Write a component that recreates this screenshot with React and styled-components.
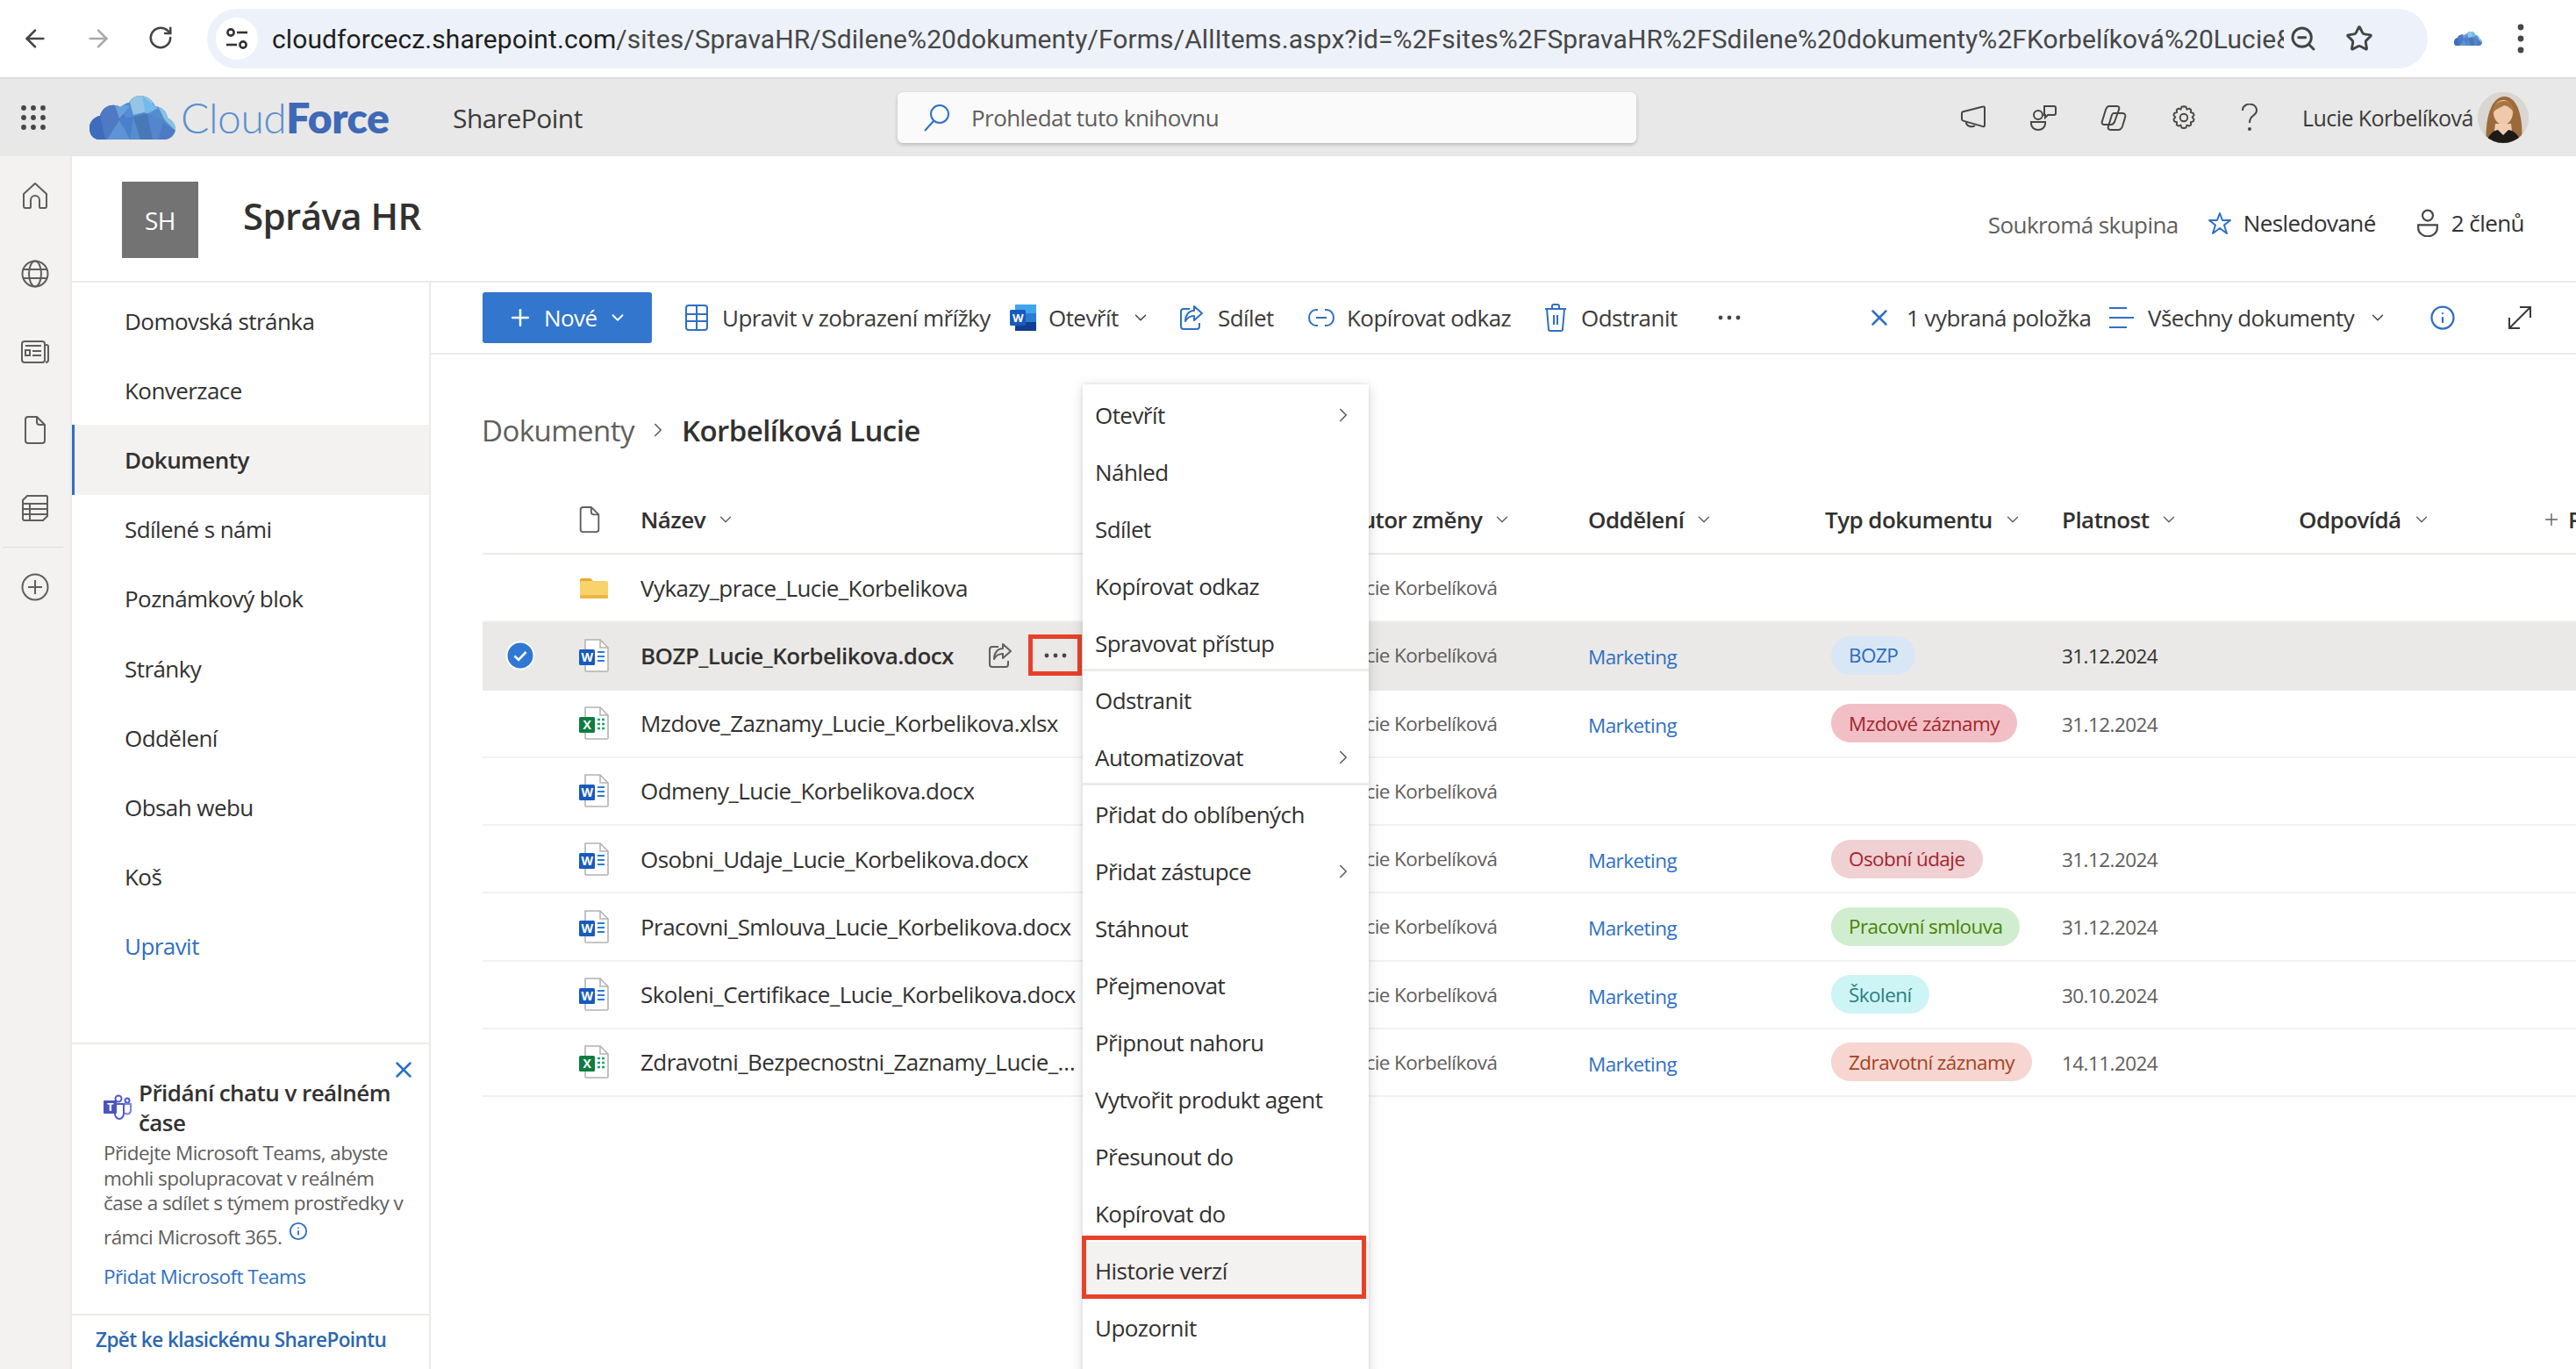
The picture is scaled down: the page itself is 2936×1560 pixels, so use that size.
import React from 'react';
import styled, { createGlobalStyle } from 'styled-components';
import { ArrowLeft, ArrowRight, RotateCw, ZoomOut, Star, ChevronDown, ChevronRight, Plus, X, Info, Search } from 'lucide-react';

const FONT = '"Open Sans", "Noto Sans", sans-serif';
const BLUE = '#2f6fc4';
const INK = '#323130';

const Global = createGlobalStyle`
  html, body { margin: 0; padding: 0; background: #fff; }
  * { box-sizing: border-box; }
  body { font-family: ${FONT}; color: ${INK}; }
`;

const Page = styled.div`
  position: relative; width: 2936px; height: 1560px; overflow: hidden;
  display: flex; flex-direction: column; background: #fff;
  font-family: ${FONT}; letter-spacing: -0.035em;
`;

/* browser chrome */
const BrowserBar = styled.div`
  height: 90px; flex: none; display: flex; align-items: center; padding-left: 24px;
  background: #fff; border-bottom: 2px solid #dedede; color: #474747;
`;
const NavIcons = styled.div`
  display: flex; gap: 40px; width: 212px; flex: none;
  svg { display: block; }
`;
const Pill = styled.div`
  width: 2531px; height: 68px; flex: none; border-radius: 34px; background: #edf2fa;
  display: flex; align-items: center; padding: 0 32px 0 10px;
`;
const TuneCircle = styled.div`
  width: 48px; height: 48px; border-radius: 50%; background: #fff; flex: none;
  display: flex; align-items: center; justify-content: center;
`;
const Url = styled.div`
  margin-left: 16px; width: 2293px; flex: none;
  font-family: Roboto, "Liberation Sans", sans-serif; font-size: 30px; letter-spacing: 0.003em;
  color: #474747; white-space: nowrap; overflow: hidden;
  b { color: #1f1f1f; font-weight: 400; }
`;
const PillIcons = styled.div`
  display: flex; gap: 32px; margin-left: 6px; color: #444;
`;
const BrowserRight = styled.div`
  display: flex; align-items: center; margin-left: 30px; gap: 40px;
`;

/* suite bar */
const SuiteBar = styled.div`
  height: 88px; flex: none; background: #e8e8e8; display: flex; align-items: center;
`;
const Waffle = styled.div`
  width: 102px; flex: none; padding-left: 24px; display: flex; align-items: center;
`;
const Brand = styled.div`
  display: flex; align-items: center; gap: 6px; width: 414px; flex: none;
`;
const BrandText = styled.div`
  font-family: Lato, "Open Sans", sans-serif; font-size: 48px; letter-spacing: -0.01em; line-height: 1;
  color: #5b8fcf; font-weight: 300; white-space: nowrap;
  b { color: #3f68b6; font-weight: 800; }
`;
const AppName = styled.div`
  width: 507px; flex: none; font-size: 30px; font-weight: 500; color: #3b3a39;
`;
const SearchBox = styled.div`
  width: 842px; height: 58px; flex: none; border-radius: 6px; background: #fafafa;
  box-shadow: 0 2px 4px rgba(0,0,0,.2); display: flex; align-items: center; gap: 24px;
  padding-left: 30px; font-size: 26px; color: #605e5c;
`;
const SuiteIcons = styled.div`
  display: flex; align-items: center; margin-left: 369px; gap: 50px; color: #484644;
  svg { display: block; }
`;
const UserName = styled.div`
  margin-left: 50px; width: 200px; font-size: 25px; color: #3b3a39; white-space: nowrap;
`;
const Avatar = styled.div`
  width: 58px; height: 58px; border-radius: 50%; overflow: hidden; flex: none; background: #d8d3cd;
  svg { display: block; }
`;

/* workspace */
const Workspace = styled.div`
  flex: 1; display: flex; min-height: 0;
`;
const Rail = styled.div`
  width: 82px; flex: none; background: #f3f2f1; border-right: 2px solid #eceae8;
  display: flex; flex-direction: column; color: #605e5c;
`;
const RailCell = styled.div`
  height: 89px; flex: none; display: flex; align-items: center; justify-content: center;
`;
const RailDivider = styled.div`
  height: 1px; margin: 0 8px 0 3px; background: #e1dfdd;
`;
const Column = styled.div`
  flex: 1; min-width: 0; display: flex; flex-direction: column;
`;
const SiteHeader = styled.div`
  height: 144px; flex: none; display: flex; align-items: flex-start; padding: 29px 59px 0 57px;
  border-bottom: 2px solid #edebe9;
`;
const SiteTile = styled.div`
  width: 87px; height: 87px; background: #737373; color: #fff; font-size: 28px;
  display: flex; align-items: center; justify-content: center; flex: none;
`;
const SiteTitle = styled.h1`
  margin: 0 0 0 51px; font-size: 42px; line-height: 78px; font-weight: 600; color: ${INK};
`;
const SiteMeta = styled.div`
  margin-left: auto; display: flex; align-items: center; height: 94px; font-size: 26px; color: ${INK};
`;
const Muted = styled.span`
  color: #605e5c; margin-right: 34px; position: relative; top: 2px;
`;
const MetaItem = styled.span`
  display: flex; align-items: center; gap: 14px; margin-right: ${p => p.$mr || 0}px;
`;
const Body = styled.div`
  flex: 1; display: flex; min-height: 0;
`;
const SideNav = styled.nav`
  width: 409px; flex: none; border-right: 2px solid #edebe9; display: flex; flex-direction: column; padding-top: 4px;
`;
const NavItem = styled.div`
  height: 79.2px; flex: none; display: flex; align-items: center; font-size: 26px;
  padding-left: ${p => (p.$active ? '57px' : '60px')};
  color: ${p => (p.$link ? BLUE : INK)};
  font-weight: ${p => (p.$active ? 600 : 400)};
  background: ${p => (p.$active ? '#f3f2f1' : 'transparent')};
  border-left: ${p => (p.$active ? `3px solid ${BLUE}` : 'none')};
`;
const TeamsCard = styled.div`
  position: relative; margin-top: auto; height: 311px; flex: none; border-top: 2px solid #edebe9;
  border-bottom: 2px solid #edebe9; padding: 38px 20px 0 36px; font-size: 22.5px; color: #605e5c;
`;
const CardClose = styled.div`
  position: absolute; top: 14px; right: 14px; color: ${BLUE};
`;
const CardHead = styled.div`
  display: flex; align-items: center; gap: 8px;
  font-size: 26px; font-weight: 600; line-height: 34px; color: ${INK}; margin-bottom: 4px;
`;
const CardBody = styled.div`
  line-height: 28.6px;
  svg { margin-left: 8px; position: relative; top: -4px; color: ${BLUE}; }
`;
const CardLast = styled.div`
  margin-top: 10px;
`;
const CardLink = styled.div`
  color: ${BLUE}; margin-top: 15px;
`;
const ClassicLink = styled.div`
  height: 61px; flex: none; display: flex; align-items: center; padding-left: 27px;
  font-size: 22.5px; font-weight: 600; color: #2b67b2; padding-bottom: 6px;
`;

/* main */
const Main = styled.main`
  flex: 1; min-width: 0; display: flex; flex-direction: column; overflow: hidden;
`;
const CommandBar = styled.div`
  height: 82px; flex: none; display: flex; align-items: center; padding-left: 59px; font-size: 26px;
  border-bottom: 2px solid #edebe9; color: #3b3a39;
`;
const NewButton = styled.div`
  width: 193px; height: 58px; flex: none; border-radius: 3px; background: #3376cd; color: #fff;
  display: flex; align-items: center; gap: 12px; padding-left: 28px; font-weight: 500; margin-right: 38px;
`;
const Cmd = styled.div`
  width: ${p => p.$w}px; flex: none; display: flex; align-items: center; gap: ${p => p.$gap ?? 16}px; white-space: nowrap;
  color: #3b3a39;
  svg { flex: none; }
  > svg.tint { color: ${BLUE}; }
  > svg.soft { color: #605e5c; }
`;
const Breadcrumb = styled.div`
  height: 156px; flex: none; display: flex; align-items: center; padding: 16px 0 0 58px; font-size: 33px; color: #605e5c;
  svg { margin: 0 14px; color: #605e5c; }
  b { font-weight: 600; color: ${INK}; }
`;
const COLS = '90px 90px 805px 275px 270px 270px 270px 270px 1fr';
const HeadRow = styled.div`
  height: 72px; flex: none; margin-left: 59px; display: grid; grid-template-columns: ${COLS}; align-items: center;
  border-bottom: 2px solid #edebe9; padding-bottom: 6px; font-size: 26px; font-weight: 600; color: ${INK}; white-space: nowrap;
`;
const HeadCell = styled.div`
  display: flex; align-items: center; gap: 12px; min-width: 0;
  svg { color: #605e5c; }
`;
const AddCol = styled.div`
  display: flex; align-items: center; gap: 8px; margin-left: 7px; font-weight: 600;
  svg { color: #605e5c; flex: none; }
`;
const Row = styled.div`
  height: 77.25px; flex: none; margin-left: 59px; display: grid; grid-template-columns: ${COLS}; align-items: center;
  border-bottom: 2px solid ${p => (p.$selected ? '#ebe9e7' : '#f3f2f1')};
  background: ${p => (p.$selected ? '#ebe9e7' : 'transparent')};
  position: relative;
`;
const CheckWrap = styled.div`
  display: flex; align-items: center; justify-content: center; padding-right: 4px;
`;
const IconCell = styled.div`
  display: flex; align-items: center; padding-left: 20px;
  svg { display: block; }
`;
const NameCell = styled.div`
  position: relative; display: flex; align-items: center; min-width: 0; font-size: 26px;
  color: ${INK}; font-weight: ${p => (p.$selected ? 600 : 400)};
`;
const NameText = styled.span`
  display: block; max-width: 502px; white-space: nowrap; overflow: hidden; text-overflow: ellipsis;
`;
const RowTools = styled.div`
  position: absolute; left: 396px; top: 0; bottom: 0; display: flex; align-items: center; color: #605e5c;
`;
const MoreBox = styled.div`
  margin-left: 18px; width: 61px; height: 47px; border: 5px solid #e8412a; display: flex; align-items: center; justify-content: center; color: #484644;
`;
const AuthorCell = styled.div`
  font-size: 22.5px; color: #605e5c; white-space: nowrap; margin-left: -3px;
`;
const LinkCell = styled.div`
  font-size: 22.5px; color: ${BLUE}; padding-top: 4px;
`;
const DateCell = styled.div`
  font-size: 22.5px; color: ${p => (p.$selected ? INK : '#605e5c')}; padding-top: 2px;
`;
const TagCell = styled.div`
  padding-left: 7px; display: flex;
`;
const Tag = styled.span`
  height: 44px; padding: 0 20px; border-radius: 22px; display: inline-flex; align-items: center; font-size: 22.5px; white-space: nowrap;
  background: ${p => p.$bg}; color: ${p => p.$fg};
`;

/* context menu */
const Menu = styled.div`
  position: absolute; left: 1234px; top: 438px; width: 326px; height: 1130px; background: #fff; padding-top: 2px;
  box-shadow: 0 3px 14px rgba(0,0,0,.16), 0 0 4px rgba(0,0,0,.08); z-index: 5;
`;
const MenuItem = styled.div`
  position: relative; height: 65px; display: flex; align-items: center; justify-content: space-between;
  padding: 0 16px 0 14px; font-size: 26px; color: ${INK};
  background: ${p => (p.$on ? '#f3f2f1' : 'transparent')};
  svg { color: #605e5c; }
`;
const Callout = styled.div`
  position: absolute; left: -1px; right: 3px; top: -7px; bottom: 0; border: 5px solid #e8412a; pointer-events: none;
`;
const MenuDivider = styled.div`
  height: 3px; margin-top: -3px; background: #edebe9; position: relative;
`;

/* drawings */
const TuneIcon = () => (
  <svg width="26" height="28" viewBox="0 0 26 28" fill="none" stroke="#333" strokeWidth="2.6">
    <circle cx="6" cy="7" r="3.6" /><path d="M13 7h12" />
    <circle cx="20" cy="21" r="3.6" /><path d="M1 21h12" />
  </svg>
);
const Dots = ({ c = '#474747' }) => (
  <svg width="8" height="34" viewBox="0 0 8 34" fill={c}><circle cx="4" cy="4" r="3.4" /><circle cx="4" cy="17" r="3.4" /><circle cx="4" cy="30" r="3.4" /></svg>
);
const ThreeDots = ({ c = '#484644' }) => (
  <svg width="26" height="6" viewBox="0 0 26 6" fill={c}><circle cx="3" cy="3" r="2.4" /><circle cx="13" cy="3" r="2.4" /><circle cx="23" cy="3" r="2.4" /></svg>
);
const WaffleIcon = () => (
  <svg width="28" height="28" viewBox="0 0 28 28" fill="#484644">
    {[3, 14, 25].flatMap(y => [3, 14, 25].map(x => <circle key={`${x}-${y}`} cx={x} cy={y} r="2.9" />))}
  </svg>
);
const CloudMark = ({ w = 98, h = 50, id = 'cl' }) => (
  <svg width={w} height={h} viewBox="0 0 98 50">
    <defs>
      <clipPath id={id}>
        <path d="M12 50C4 50 0 44 0 37c0-7 5-13 12-14 2-8 9-13 17-12 3 0 5 1 6 2 4-3 7-5 10-5 2-5 7-8 13-8 8 0 14 5 17 12 8 1 13 6 14 13 5 3 9 7 9 13 0 7-6 12-13 12z" />
      </clipPath>
    </defs>
    <g clipPath={`url(#${id})`}>
      <rect width="98" height="50" fill="#558dcf" />
      <polygon points="0,20 30,8 45,30 20,50 0,50" fill="#4f79c4" />
      <polygon points="0,30 12,22 18,50 0,50" fill="#3f6dbd" />
      <polygon points="28,8 46,12 34,26" fill="#67a0dc" />
      <polygon points="44,0 78,0 66,18 50,22" fill="#94c5e4" />
      <polygon points="60,0 78,14 64,22" fill="#73b9ea" />
      <polygon points="78,12 98,24 98,40 86,28" fill="#8bc2e2" />
      <polygon points="50,24 66,20 72,50 58,50" fill="#4878b8" />
      <polygon points="66,20 86,28 82,50 72,50" fill="#5486ce" />
      <polygon points="20,50 34,28 46,50" fill="#5c95d6" />
      <polygon points="34,26 50,24 46,50" fill="#4a80cb" />
      <polygon points="84,30 98,40 90,50 78,50" fill="#4c7bc4" />
    </g>
  </svg>
);
const Megaphone = () => (
  <svg width="30" height="28" viewBox="0 0 30 28" fill="none" stroke="#484644" strokeWidth="2" strokeLinejoin="round">
    <path d="M2 9c0-1 .5-1.4 1.5-1.7L26 1.5c1-.3 2 .2 2 1.3v20c0 1.2-1 1.7-2 1.3L3.5 17.6C2.5 17.3 2 16.8 2 16z" />
    <path d="M7 19a6 5 0 0 0 10 4" />
  </svg>
);
const PeopleChat = () => (
  <svg width="30" height="30" viewBox="0 0 30 30" fill="none" stroke="#484644" strokeWidth="2">
    <circle cx="9" cy="12" r="5" /><path d="M1 20h16v2a8 7 0 0 1-16 0z" />
    <path d="M16 2h11a2 2 0 0 1 2 2v6a2 2 0 0 1-2 2h-7l-3 3v-3h-1z" />
  </svg>
);
const Copilot = () => (
  <svg width="30" height="30" viewBox="0 0 30 30" fill="none" stroke="#484644" strokeWidth="2" strokeLinejoin="round">
    <path d="M10 2h9c2 0 3 2 2 4l-5 14c-1 2-2 3-4 3H4c-2 0-3-2-2-4L6 6c1-3 2-4 4-4z" />
    <path d="M15 10h10c3 0 4 2 3 5l-3 10c-1 3-2 4-5 4h-8c-3 0-4-2-3-4l4-13c.5-1 1-2 2-2z" />
  </svg>
);
const Gear = () => (
  <svg width="30" height="30" viewBox="0 0 24 24" fill="none" stroke="#484644" strokeWidth="1.5" strokeLinejoin="round">
    <circle cx="12" cy="12" r="3.4" />
    <path d="M12 1.8l2 .4.8 2.4 2-.9 1.8 1.1-.3 2.4 2.3.7.7 1.9-1.6 1.9 1.6 1.9-.7 1.9-2.3.7.3 2.4-1.8 1.1-2-.9-.8 2.4-2 .4-2-.4-.8-2.4-2 .9-1.8-1.1.3-2.4-2.3-.7-.7-1.9 1.6-1.9-1.6-1.9.7-1.9 2.3-.7-.3-2.4 1.8-1.1 2 .9.8-2.4z" />
  </svg>
);
const Question = () => (
  <svg width="20" height="32" viewBox="0 0 20 32" fill="none" stroke="#484644" strokeWidth="2">
    <path d="M2 8a8 7 0 1 1 13 5c-3 2.500-5 4-5 9" /><circle cx="10" cy="29" r="1" fill="#484644" />
  </svg>
);
const AvatarArt = () => (
  <svg width="58" height="58" viewBox="0 0 58 58">
    <rect width="58" height="58" fill="#d9d5d0" />
    <path d="M10 58C8 40 12 6 30 5c18 0 22 30 20 53z" fill="#9b6a3a" />
    <ellipse cx="29" cy="23" rx="11" ry="14" fill="#eec9ac" />
    <path d="M20 36h18l1 8 6 14H13l6-14z" fill="#f0ccb0" />
    <path d="M10 58c2-10 8-14 13-15l6 6 6-6c6 1 12 5 14 15z" fill="#1d1b1a" />
    <path d="M17 26c0-12 6-16 13-16s12 6 12 16c-3-8-8-10-12-11-3 3-11 3-13 11z" fill="#a87640" />
  </svg>
);
const Person = ({ size = 26 }) => (
  <svg width={size} height={size * 1.25} viewBox="0 0 24 30" fill="none" stroke="#484644" strokeWidth="2">
    <circle cx="12" cy="7" r="5.500" /><path d="M2 17h20v3a10 9 0 0 1-20 0z" />
  </svg>
);
const HomeIcon = () => (
  <svg width="30" height="32" viewBox="0 0 30 32" fill="none" stroke="#605e5c" strokeWidth="2" strokeLinejoin="round">
    <path d="M15 2L2 14v14a2 2 0 0 0 2 2h5a1 1 0 0 0 1-1V21a5 5 0 0 1 10 0v8a1 1 0 0 0 1 1h5a2 2 0 0 0 2-2V14z" />
  </svg>
);
const GlobeIcon = () => (
  <svg width="32" height="32" viewBox="0 0 32 32" fill="none" stroke="#605e5c" strokeWidth="2">
    <circle cx="16" cy="16" r="14.500" /><ellipse cx="16" cy="16" rx="7" ry="14.500" /><path d="M2 11h28M2 21h28" />
  </svg>
);
const NewsIcon = () => (
  <svg width="32" height="26" viewBox="0 0 32 26" fill="none" stroke="#605e5c" strokeWidth="2">
    <rect x="1" y="1" width="26" height="24" rx="3" /><path d="M27 5h2a2 2 0 0 1 2 2v15a3 3 0 0 1-3 3M5 6h18M13 12h10M13 17h10" /><rect x="5" y="11" width="5" height="6" />
  </svg>
);
const PageIcon = ({ c = '#605e5c', w = 24, h = 32 }) => (
  <svg width={w} height={h} viewBox="0 0 24 32" fill="none" stroke={c} strokeWidth="2" strokeLinejoin="round">
    <path d="M4 1h10l9 9v18a3 3 0 0 1-3 3H4a3 3 0 0 1-3-3V4a3 3 0 0 1 3-3z" /><path d="M14 1v6a3 3 0 0 0 3 3h6" />
  </svg>
);
const ListIcon = () => (
  <svg width="30" height="30" viewBox="0 0 30 30" fill="none" stroke="#605e5c" strokeWidth="2">
    <path d="M6 1h22a1 1 0 0 1 1 1v22l-5 5H3a2 2 0 0 1-2-2V6z" /><path d="M1 10h28M1 16h28M1 22h28M9 10v19" />
  </svg>
);
const PlusCircle = () => (
  <svg width="32" height="32" viewBox="0 0 32 32" fill="none" stroke="#605e5c" strokeWidth="2">
    <circle cx="16" cy="16" r="14.500" /><path d="M16 8v16M8 16h16" />
  </svg>
);
const TeamsIcon = () => (
  <svg width="32" height="30" viewBox="0 0 32 30" style={{ flex: 'none' }}>
    <circle cx="17" cy="5" r="3.500" fill="none" stroke="#5059c9" strokeWidth="2" />
    <circle cx="27" cy="7" r="2.500" fill="none" stroke="#5059c9" strokeWidth="2" />
    <path d="M13 11h10v11a5 6 0 0 1-10 0z" fill="none" stroke="#5059c9" strokeWidth="2" />
    <path d="M24 11h7v8a4 4 0 0 1-7 2" fill="none" stroke="#7b83eb" strokeWidth="2" />
    <rect x="0" y="7" width="15" height="15" rx="1" fill="#4b53bc" />
    <text x="7.500" y="19" textAnchor="middle" fontSize="13" fontWeight="700" fontFamily="Open Sans, sans-serif" fill="#fff">T</text>
  </svg>
);
const GridIcon = () => (
  <svg className="tint" width="26" height="30" viewBox="0 0 26 30" fill="none" stroke="currentColor" strokeWidth="2">
    <rect x="1" y="1" width="24" height="28" rx="3" /><path d="M1 11h24M1 19h24M13 1v28" />
  </svg>
);
const WordCmd = () => (
  <svg width="30" height="30" viewBox="0 0 30 30">
    <rect x="6" y="0" width="24" height="10" fill="#41a5ee" /><rect x="6" y="10" width="24" height="10" fill="#2b7cd3" />
    <rect x="6" y="20" width="24" height="10" fill="#103f91" /><rect x="0" y="6" width="18" height="18" rx="1.500" fill="#185abd" />
    <text x="9" y="20" textAnchor="middle" fontSize="13" fontWeight="700" fontFamily="Open Sans, sans-serif" fill="#fff">W</text>
  </svg>
);
const ShareIcon = ({ c }) => (
  <svg className="tint" width="28" height="30" viewBox="0 0 28 30" fill="none" stroke={c || 'currentColor'} strokeWidth="2" strokeLinejoin="round">
    <path d="M12 5H5a3 3 0 0 0-3 3v17a3 3 0 0 0 3 3h15a3 3 0 0 0 3-3v-4" />
    <path d="M17 2l9 8-9 8v-5c-5 0-8 2-10 6 0-7 4-12 10-12z" />
  </svg>
);
const LinkIcon = () => (
  <svg className="tint" width="30" height="22" viewBox="0 0 30 22" fill="none" stroke="currentColor" strokeWidth="2">
    <path d="M11 2H9a8 9 0 0 0 0 18h2M19 2h2a8 9 0 0 1 0 18h-2M9 11h12" />
  </svg>
);
const TrashIcon = () => (
  <svg className="tint" width="26" height="32" viewBox="0 0 26 32" fill="none" stroke="currentColor" strokeWidth="2" strokeLinejoin="round">
    <path d="M1 6h24M9 6V3a2 2 0 0 1 2-2h4a2 2 0 0 1 2 2v3M3 6l2 23a2 2 0 0 0 2 2h12a2 2 0 0 0 2-2l2-23M11 13v11M15 13v11" />
  </svg>
);
const LinesIcon = () => (
  <svg className="tint" width="30" height="26" viewBox="0 0 30 26" fill="none" stroke="currentColor" strokeWidth="2.200">
    <path d="M2 2h20M2 13h28M2 24h20" />
  </svg>
);
const ExpandIcon = () => (
  <svg width="28" height="28" viewBox="0 0 28 28" fill="none" stroke="currentColor" strokeWidth="2">
    <path d="M2 26L26 2M14 2h12v12M2 14v12h12" />
  </svg>
);
const StarOutline = () => (
  <svg width="26" height="26" viewBox="0 0 26 26" fill="none" stroke={BLUE} strokeWidth="2" strokeLinejoin="round">
    <path d="M13 2l3 8h9l-7 5.500 3 9.500-8-6-8 6 3-9.500L1 10h9z" />
  </svg>
);
const FileBase = ({ children }) => (
  <svg width="34" height="38" viewBox="0 0 34 38">
    <path d="M7 1h17l9 9v26a1 1 0 0 1-1 1H8a1 1 0 0 1-1-1z" fill="#fff" stroke="#b5b3b1" strokeWidth="1.600" />
    <path d="M24 1v9h9" fill="none" stroke="#b5b3b1" strokeWidth="1.600" />
    {children}
  </svg>
);
const WordFile = () => (
  <FileBase>
    <path d="M21 15h8M21 20h8M21 25h8" stroke="#2b7cd3" strokeWidth="1.800" />
    <rect x="0" y="12" width="18" height="18" rx="1.500" fill="#185abd" />
    <text x="9" y="26" textAnchor="middle" fontSize="14" fontWeight="700" fontFamily="Open Sans, sans-serif" fill="#fff">W</text>
  </FileBase>
);
const ExcelFile = () => (
  <FileBase>
    <path d="M21 15h3M26 15h3M21 20h3M26 20h3M21 25h3M26 25h3" stroke="#21a366" strokeWidth="2.400" />
    <rect x="0" y="12" width="18" height="18" rx="1.500" fill="#107c41" />
    <text x="9" y="26" textAnchor="middle" fontSize="14" fontWeight="700" fontFamily="Open Sans, sans-serif" fill="#fff">X</text>
  </FileBase>
);
const FolderIcon = () => (
  <svg width="34" height="24" viewBox="0 0 34 24">
    <path d="M1 3a2 2 0 0 1 2-2h10l3 3v4H1z" fill="#e6a92e" />
    <rect x="1" y="4" width="32" height="20" rx="2" fill="#f8d26b" />
    <rect x="1" y="20" width="32" height="4" rx="1.500" fill="#ecb53f" />
  </svg>
);
const CheckDot = () => (
  <svg width="34" height="34" viewBox="0 0 34 34">
    <circle cx="17" cy="17" r="16.500" fill="#fff" />
    <circle cx="17" cy="17" r="14.500" fill="#2f78d4" />
    <path d="M10.500 17.500l4.500 4.500 8.500-9" fill="none" stroke="#fff" strokeWidth="2.600" />
  </svg>
);
const SearchGlass = () => (
  <svg width="30" height="32" viewBox="0 0 30 32" fill="none" stroke={BLUE} strokeWidth="2">
    <circle cx="18" cy="12" r="10" /><path d="M11 20L1 31" />
  </svg>
);

const NAV = ['Domovská stránka', 'Konverzace', 'Dokumenty', 'Sdílené s námi', 'Poznámkový blok', 'Stránky', 'Oddělení', 'Obsah webu', 'Koš'];
const TAGS = {
  bozp: { t: 'BOZP', bg: '#d8e6f5', fg: '#2b6bb9' },
  mzd: { t: 'Mzdové záznamy', bg: '#f2bfc7', fg: '#a4262c' },
  oso: { t: 'Osobní údaje', bg: '#efd0d3', fg: '#a4262c' },
  pra: { t: 'Pracovní smlouva', bg: '#d1edd0', fg: '#498205' },
  sko: { t: 'Školení', bg: '#cdf5f6', fg: '#2c7d80' },
  zdr: { t: 'Zdravotní záznamy', bg: '#f7d6d1', fg: '#a5431d' },
};
const ROWS = [
  { n: 'Vykazy_prace_Lucie_Korbelikova', k: 'folder' },
  { n: 'BOZP_Lucie_Korbelikova.docx', k: 'w', tag: 'bozp', d: '31.12.2024', sel: true },
  { n: 'Mzdove_Zaznamy_Lucie_Korbelikova.xlsx', k: 'x', tag: 'mzd', d: '31.12.2024' },
  { n: 'Odmeny_Lucie_Korbelikova.docx', k: 'w' },
  { n: 'Osobni_Udaje_Lucie_Korbelikova.docx', k: 'w', tag: 'oso', d: '31.12.2024' },
  { n: 'Pracovni_Smlouva_Lucie_Korbelikova.docx', k: 'w', tag: 'pra', d: '31.12.2024' },
  { n: 'Skoleni_Certifikace_Lucie_Korbelikova.docx', k: 'w', tag: 'sko', d: '30.10.2024' },
  { n: 'Zdravotni_Bezpecnostni_Zaznamy_Lucie_Korbelikova.xlsx', k: 'x', tag: 'zdr', d: '14.11.2024' },
];
const HEADS = ['Autor změny', 'Oddělení', 'Typ dokumentu', 'Platnost', 'Odpovídá'];
const MENU = [
  [['Otevřít', 1], ['Náhled'], ['Sdílet'], ['Kopírovat odkaz'], ['Spravovat přístup']],
  [['Odstranit'], ['Automatizovat', 1]],
  [['Přidat do oblíbených'], ['Přidat zástupce', 1], ['Stáhnout'], ['Přejmenovat'], ['Připnout nahoru'], ['Vytvořit produkt agent'], ['Přesunout do'], ['Kopírovat do'], ['Historie verzí'], ['Upozornit']],
];

export default function App() {
  return (
    <Page>
      <Global />
      <BrowserBar>
        <NavIcons>
          <ArrowLeft size={32} strokeWidth={2} color="#444" />
          <ArrowRight size={32} strokeWidth={2} color="#aaa" />
          <RotateCw size={30} strokeWidth={2} color="#444" />
        </NavIcons>
        <Pill>
          <TuneCircle><TuneIcon /></TuneCircle>
          <Url><b>cloudforcecz.sharepoint.com</b>/sites/SpravaHR/Sdilene%20dokumenty/Forms/AllItems.aspx?id=%2Fsites%2FSpravaHR%2FSdilene%20dokumenty%2FKorbelíková%20Lucie&...</Url>
          <PillIcons>
            <ZoomOut size={32} strokeWidth={2.2} />
            <Star size={32} strokeWidth={2.2} />
          </PillIcons>
        </Pill>
        <BrowserRight>
          <CloudMark w={32} h={18} id="cl2" />
          <Dots />
        </BrowserRight>
      </BrowserBar>

      <SuiteBar>
        <Waffle><WaffleIcon /></Waffle>
        <Brand>
          <CloudMark />
          <BrandText>Cloud<b>Force</b></BrandText>
        </Brand>
        <AppName>SharePoint</AppName>
        <SearchBox><SearchGlass /><span>Prohledat tuto knihovnu</span></SearchBox>
        <SuiteIcons>
          <Megaphone /><PeopleChat /><Copilot /><Gear /><Question />
        </SuiteIcons>
        <UserName>Lucie Korbelíková</UserName>
        <Avatar><AvatarArt /></Avatar>
      </SuiteBar>

      <Workspace>
        <Rail>
          <RailCell><HomeIcon /></RailCell>
          <RailCell><GlobeIcon /></RailCell>
          <RailCell><NewsIcon /></RailCell>
          <RailCell><PageIcon /></RailCell>
          <RailCell><ListIcon /></RailCell>
          <RailDivider />
          <RailCell><PlusCircle /></RailCell>
        </Rail>
        <Column>
          <SiteHeader>
            <SiteTile>SH</SiteTile>
            <SiteTitle>Správa HR</SiteTitle>
            <SiteMeta>
              <Muted>Soukromá skupina</Muted>
              <MetaItem $mr={46}><StarOutline />Nesledované</MetaItem>
              <MetaItem><Person />2 členů</MetaItem>
            </SiteMeta>
          </SiteHeader>
          <Body>
            <SideNav>
              {NAV.map(n => <NavItem key={n} $active={n === 'Dokumenty'}>{n}</NavItem>)}
              <NavItem $link>Upravit</NavItem>
              <TeamsCard>
                <CardClose><X size={30} strokeWidth={2} /></CardClose>
                <CardHead><TeamsIcon /><span>Přidání chatu v reálném čase</span></CardHead>
                <CardBody>
                  Přidejte Microsoft Teams, abyste mohli spolupracovat v reálném čase a sdílet s týmem prostředky v
                  <CardLast>rámci Microsoft 365.<Info size={22} strokeWidth={2} /></CardLast>
                </CardBody>
                <CardLink>Přidat Microsoft Teams</CardLink>
              </TeamsCard>
              <ClassicLink>Zpět ke klasickému SharePointu</ClassicLink>
            </SideNav>
            <Main>
              <CommandBar>
                <NewButton><Plus size={30} strokeWidth={2} /><span>Nové</span><ChevronDown size={22} strokeWidth={2} /></NewButton>
                <Cmd $w={370}><GridIcon />Upravit v zobrazení mřížky</Cmd>
                <Cmd $w={193} $gap={14}><WordCmd />Otevřít<ChevronDown size={22} strokeWidth={1.5} /></Cmd>
                <Cmd $w={147}><ShareIcon />Sdílet</Cmd>
                <Cmd $w={269} $gap={14}><LinkIcon />Kopírovat odkaz</Cmd>
                <Cmd $w={198}><TrashIcon />Odstranit</Cmd>
                <Cmd $w={169}><ThreeDots /></Cmd>
                <Cmd $w={275}><X className="tint" size={30} strokeWidth={2} />1 vybraná položka</Cmd>
                <Cmd $w={367} $gap={16}><LinesIcon />Všechny dokumenty<ChevronDown size={22} strokeWidth={1.5} /></Cmd>
                <Cmd $w={89}><Info className="tint" size={30} strokeWidth={1.8} /></Cmd>
                <Cmd $w={40}><ExpandIcon /></Cmd>
              </CommandBar>
              <Breadcrumb>
                <span>Dokumenty</span>
                <ChevronRight size={26} strokeWidth={1.5} />
                <b>Korbelíková Lucie</b>
              </Breadcrumb>
              <HeadRow>
                <div />
                <IconCell><PageIcon w={24} h={30} /></IconCell>
                <HeadCell>Název<ChevronDown size={22} strokeWidth={1.5} /></HeadCell>
                {HEADS.map(h => <HeadCell key={h}>{h}<ChevronDown size={22} strokeWidth={1.5} /></HeadCell>)}
                <AddCol><Plus size={22} strokeWidth={1.5} />Přidat sloupec</AddCol>
              </HeadRow>
              {ROWS.map(r => (
                <Row key={r.n} $selected={r.sel}>
                  <CheckWrap>{r.sel && <CheckDot />}</CheckWrap>
                  <IconCell>
                    {r.k === 'folder' ? <FolderIcon /> : r.k === 'w' ? <WordFile /> : <ExcelFile />}
                  </IconCell>
                  <NameCell $selected={r.sel}>
                    <NameText>{r.n}</NameText>
                    {r.sel && (
                      <RowTools>
                        <ShareIcon c="#605e5c" />
                        <MoreBox><ThreeDots /></MoreBox>
                      </RowTools>
                    )}
                  </NameCell>
                  <AuthorCell>Lucie Korbelíková</AuthorCell>
                  <LinkCell>{r.tag ? 'Marketing' : ''}</LinkCell>
                  <TagCell>{r.tag && <Tag $bg={TAGS[r.tag].bg} $fg={TAGS[r.tag].fg}>{TAGS[r.tag].t}</Tag>}</TagCell>
                  <DateCell $selected={r.sel}>{r.d || ''}</DateCell>
                  <div />
                  <div />
                </Row>
              ))}
            </Main>
          </Body>
        </Column>
      </Workspace>

      <Menu>
        {MENU.map((group, i) => (
          <React.Fragment key={i}>
            {group.map(([t, sub]) => (
              <MenuItem key={t} $on={t === 'Historie verzí'}>
                <span>{t}</span>
                {sub && <ChevronRight size={26} strokeWidth={1.5} />}
                {t === 'Historie verzí' && <Callout />}
              </MenuItem>
            ))}
            {i < MENU.length - 1 && <MenuDivider />}
          </React.Fragment>
        ))}
      </Menu>
    </Page>
  );
}
